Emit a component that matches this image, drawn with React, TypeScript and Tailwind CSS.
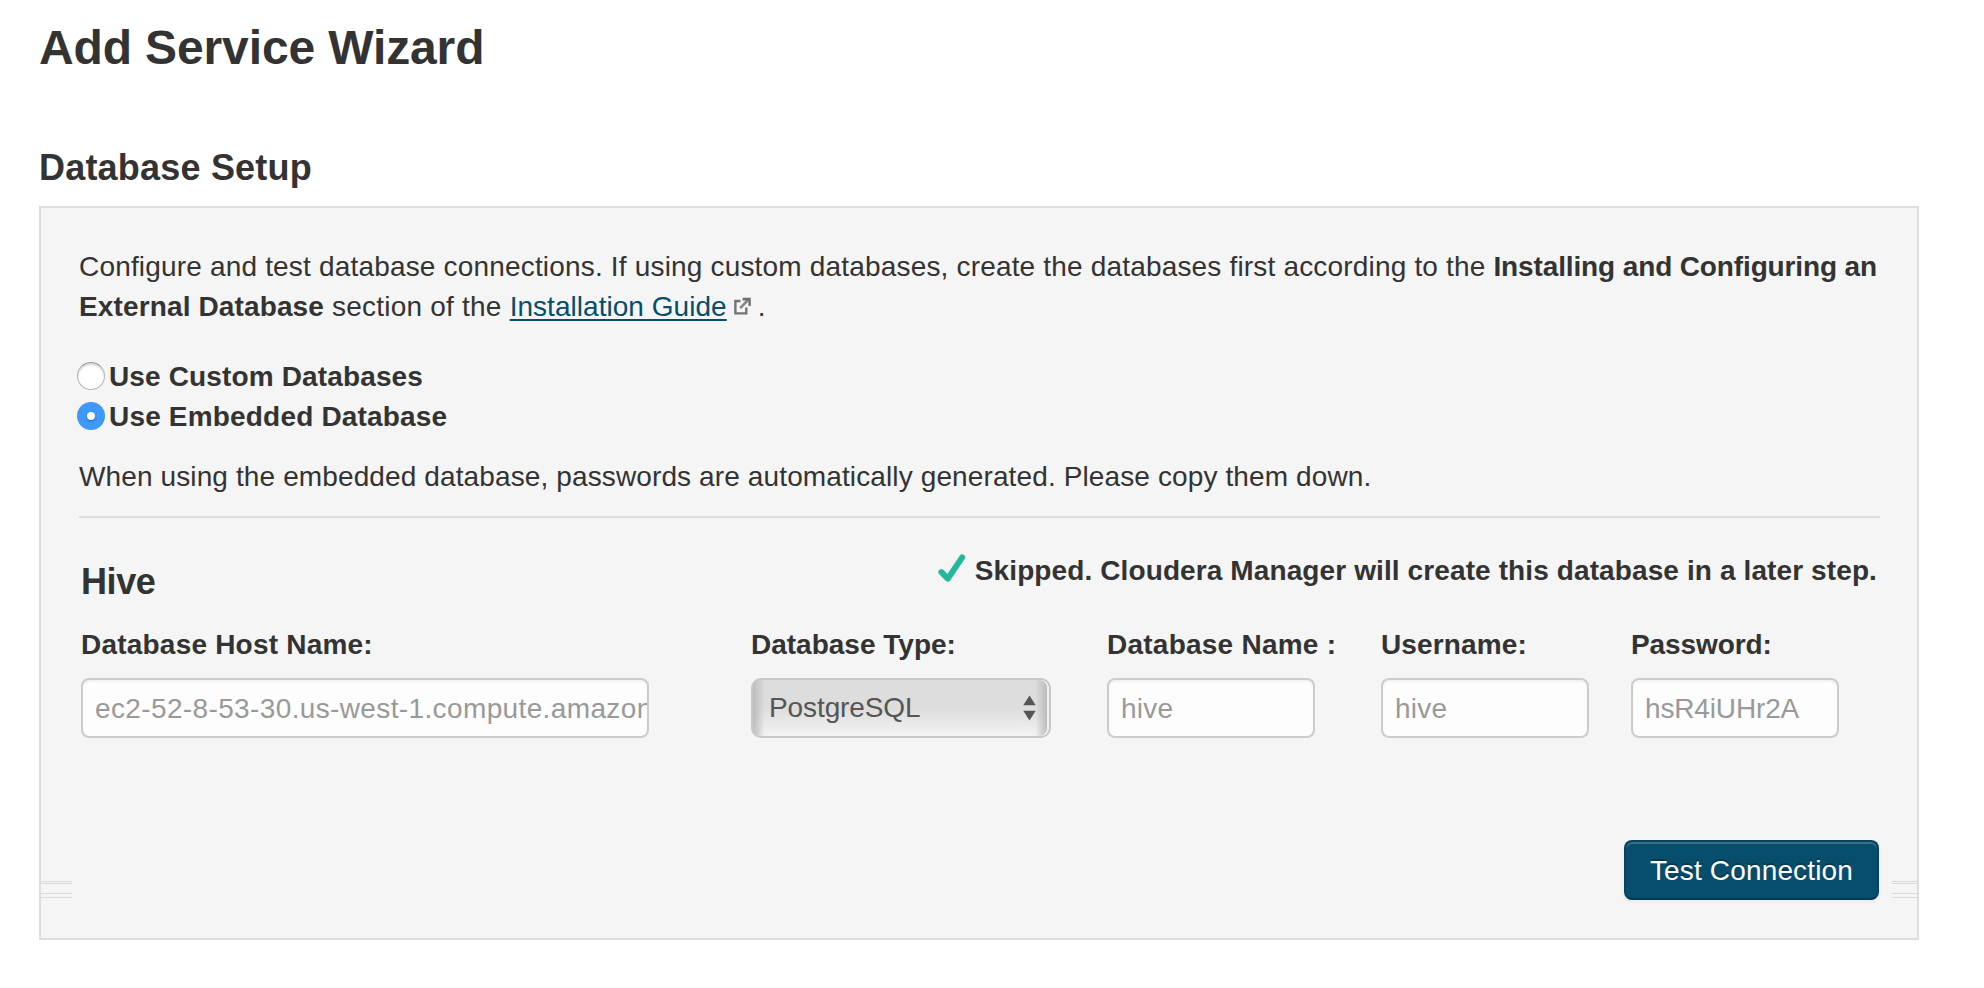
import React from "react";

function Radio({ checked = false }: { checked?: boolean }) {
  return checked ? (
    <span className="-ml-0.5 -mt-0.5 mr-1 flex size-7 items-center justify-center rounded-full bg-[#3f99f9]">
      <span className="size-2 rounded-full bg-white shadow-[0_1px_2px_rgba(0,40,110,0.5)]" />
    </span>
  ) : (
    <span className="-ml-0.5 -mt-0.5 mr-1 size-7 rounded-full border border-[#b4b4b4] border-t-[#989898] bg-white shadow-[inset_0_2px_2px_rgba(0,0,0,0.16)]" />
  );
}

function ExternalIcon() {
  return (
    <svg className="ml-[7px] inline-block align-[1px]" width="17" height="18" viewBox="0 0 17 18" fill="none">
      <path d="M6.5 4H1.4V16.4H12.3V10.5" stroke="#747474" strokeWidth="2.4" />
      <path d="M6.2 11.2L14 3" stroke="#858585" strokeWidth="2.6" />
      <path d="M8.6 0.8H16.8V9H14.4V3.6H8.6Z" fill="#707070" />
    </svg>
  );
}

function CheckIcon() {
  return (
    <svg className="mr-[9px] mt-[3px]" width="28" height="28" viewBox="0 0 28 28" fill="none">
      <path d="M3.4 18.2L9.8 24.6L24.2 3.4" stroke="#22b899" strokeWidth="6" strokeLinecap="round" strokeLinejoin="round" />
    </svg>
  );
}

const inputClass =
  "block h-[60px] rounded-lg border-2 border-[#cccccc] bg-[#fdfdfd] pl-3 pt-0.5 text-[28px] text-[#999999] shadow-[inset_0_2px_3px_rgba(0,0,0,0.05)] outline-none";

function EdgeLines({ className }: { className: string }) {
  return (
    <div className={className}>
      <div className="mt-[41px] h-px bg-[#dadada]" />
      <div className="mt-px h-px bg-[#dadada]" />
      <div className="mt-[9px] h-px bg-[#dadada]" />
      <div className="mt-[3px] h-px bg-[#dadada]" />
    </div>
  );
}

export default function App() {
  return (
    <div className="h-[988px] w-[1984px] overflow-hidden bg-white pl-[39px] pt-[18px] font-['Liberation_Sans',Arial,sans-serif] text-[28px] leading-10 text-[#333333]">
      <h1 className="text-[48px] font-bold leading-[60px] tracking-[-0.13px]">Add Service Wizard</h1>
      <h2 className="mt-[70px] text-[36px] font-bold leading-10 tracking-[0.2px]">Database Setup</h2>

      <section className="mt-[18px] h-[734px] w-[1880px] border-2 border-[#dddddd] bg-[#f5f5f5] px-[38px] pt-[39px]">
        <p className="whitespace-nowrap">
          <span className="tracking-[0.177px]">
            Configure and test database connections. If using custom databases, create the databases first according to the{" "}
          </span>
          <b className="tracking-[-0.13px]">Installing and Configuring an</b>
          <br />
          <b className="tracking-[0.13px]">External Database</b>
          <span className="tracking-[0.22px]"> section of the </span>
          <a className="tracking-[0.04px] text-[#074d6c] underline decoration-2 underline-offset-[3px]">Installation Guide</a>
          <ExternalIcon />
          <span className="ml-[7px]">.</span>
        </p>

        <div className="mt-[30px]">
          <label className="flex items-center font-bold tracking-[0.14px]">
            <Radio />
            Use Custom Databases
          </label>
          <label className="flex items-center font-bold tracking-[0.18px]">
            <Radio checked />
            Use Embedded Database
          </label>
        </div>

        <p className="mt-5 tracking-[0.12px]">
          When using the embedded database, passwords are automatically generated. Please copy them down.
        </p>
        <hr className="-mr-px mt-[19px] border-0 border-t-2 border-[#dddddd]" />

        <div className="mt-[33px] flex h-[74px] items-start justify-between pl-0.5 pr-0.5">
          <h3 className="mt-[11px] text-[36px] font-bold leading-10 tracking-[-0.4px]">Hive</h3>
          <div className="flex font-bold tracking-[0.11px]">
            <CheckIcon />
            Skipped. Cloudera Manager will create this database in a later step.
          </div>
        </div>

        <div className="flex pl-0.5">
          <div className="w-[670px] shrink-0">
            <div className="mb-[13px] font-bold tracking-[0.21px]">Database Host Name:</div>
            <input readOnly className={`${inputClass} w-[568px] tracking-[0.37px]`} value="ec2-52-8-53-30.us-west-1.compute.amazonaws.com" />
          </div>
          <div className="w-[356px] shrink-0">
            <div className="mb-[13px] font-bold">Database Type:</div>
            <div className="h-[60px] w-[300px] overflow-hidden rounded-[10px] border-2 border-[#c8c8c8] bg-linear-to-b from-[#dddddd] from-50% to-[#f3f3f3] shadow-[inset_-2px_0_0_#f0f0f0]">
              <div className="mr-0.5 flex h-full items-center justify-between rounded-r-lg bg-linear-to-r from-[#bcbcbc] via-transparent via-[4%] to-transparent">
                <div className="flex h-full w-full items-center justify-between rounded-r-lg bg-linear-to-l from-[#bcbcbc] via-transparent via-[4%] to-transparent pl-4 pr-[11px] text-[#555555]">
                  <span className="tracking-[-0.1px]">PostgreSQL</span>
                  <svg width="13" height="26" viewBox="0 0 13 26" fill="#555555">
                    <path d="M6.5 0.5L12.7 10.3H0.3Z" />
                    <path d="M6.5 25.5L12.7 15.7H0.3Z" />
                  </svg>
                </div>
              </div>
            </div>
          </div>
          <div className="w-[274px] shrink-0">
            <div className="mb-[13px] font-bold tracking-[0.24px]">Database Name :</div>
            <input readOnly className={`${inputClass} w-[208px] tracking-[0.2px]`} value="hive" />
          </div>
          <div className="w-[250px] shrink-0">
            <div className="mb-[13px] font-bold tracking-[0.14px]">Username:</div>
            <input readOnly className={`${inputClass} w-[208px] tracking-[0.2px]`} value="hive" />
          </div>
          <div className="w-[208px] shrink-0">
            <div className="mb-[13px] font-bold tracking-[-0.1px]">Password:</div>
            <input readOnly className={`${inputClass} w-[208px] tracking-[-0.15px]`} value="hsR4iUHr2A" />
          </div>
        </div>

        <div className="-mx-[38px] mt-[102px] flex items-start">
          <EdgeLines className="w-[31px]" />
          <button className="ml-auto mr-[13px] h-[60px] w-[255px] rounded-lg border-2 border-[#064360] border-b-[#043850] bg-[#074d6c] pt-0.5 tracking-[0.15px] text-white shadow-[inset_0_2px_0_rgba(255,255,255,0.2),0_2px_4px_rgba(0,0,0,0.05)] [text-shadow:0_-2px_0_rgba(0,0,0,0.25)]">
            Test Connection
          </button>
          <EdgeLines className="w-[25px]" />
        </div>
      </section>
    </div>
  );
}
